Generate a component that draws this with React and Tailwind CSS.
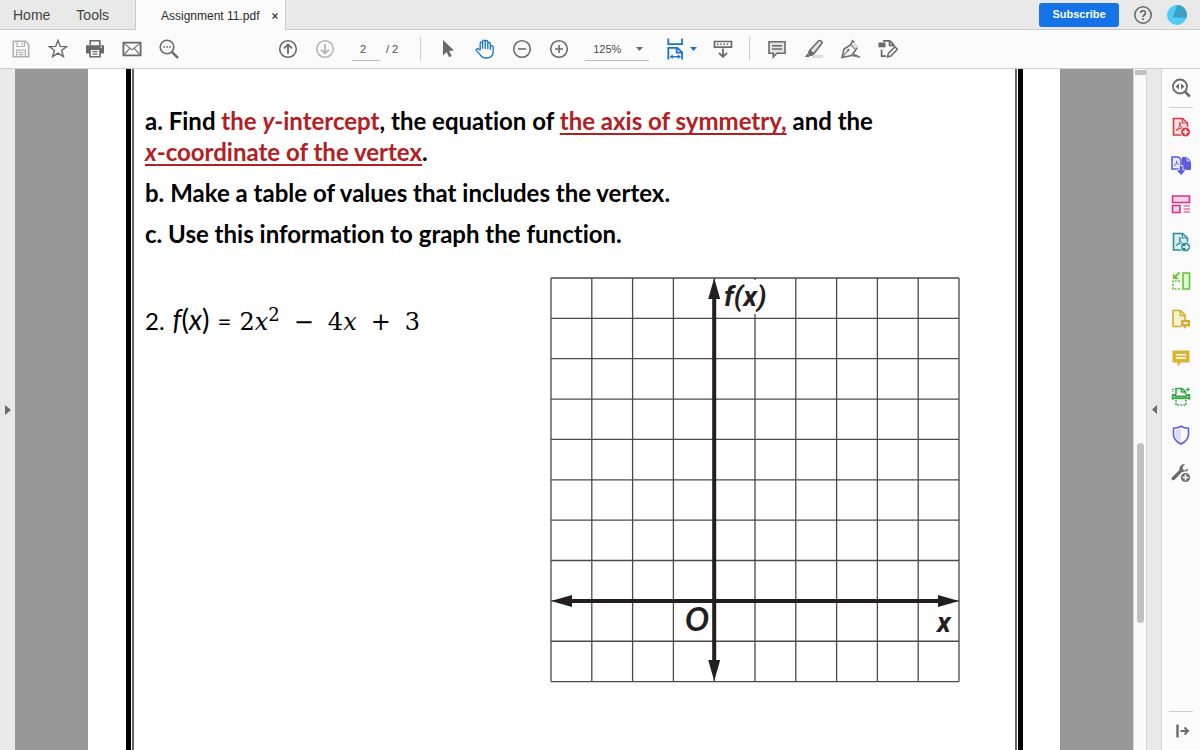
import { useState } from 'react'

const GREY = '#6a6a6a'

// 20x20 line drawing used by every toolbar button
function Icon({ size = 20, color = GREY, children }) {
    return (
        <svg
            width={size}
            height={size}
            viewBox="0 0 20 20"
            fill="none"
            stroke={color}
            strokeWidth="1.6"
            aria-hidden="true"
        >
            {children}
        </svg>
    )
}

function IconButton({ label, size, color, children }) {
    return (
        <button aria-label={label} className="flex h-5 w-5 shrink-0 items-center justify-center">
            <Icon size={size} color={color}>{children}</Icon>
        </button>
    )
}

function TabBar() {
    return (
        <header className="flex h-[30px] shrink-0 bg-[#e9e9e9] text-sm text-[#444]">
            <nav className="flex w-[136px] shrink-0 items-center gap-[26px] border-r border-b border-[#cbcbcb] pl-[13px]">
                <a href="#home">Home</a>
                <a href="#tools">Tools</a>
            </nav>
            <div className="flex w-[149px] shrink-0 items-center bg-[#fbfbfb] pt-px pl-[25px] text-xs text-[#2c2c2c]">
                <span className="whitespace-nowrap">Assignment 11.pdf</span>
                <button aria-label="Close tab" className="ml-3">
                    <svg width="6" height="6" viewBox="0 0 7 7" stroke="#444" strokeWidth="1.6">
                        <path d="M.7.7l5.6 5.6M6.3.7L.7 6.3" />
                    </svg>
                </button>
            </div>
            <div className="flex flex-1 items-center justify-end border-b border-l border-[#cbcbcb] pr-[13px]">
                <button className="mr-[14px] h-6 w-20 rounded-[3px] bg-[#1473e6] text-[11px] font-bold text-white">
                    Subscribe
                </button>
                <IconButton label="Help">
                    <circle cx="10" cy="10" r="8.2" />
                    <path d="M7.6 8.1a2.4 2.3 0 1 1 3.7 1.9c-.9.6-1.3.9-1.3 2" strokeWidth="1.7" />
                    <path d="M9.1 13.2h1.8v1.8H9.1z" fill={GREY} stroke="none" />
                </IconButton>
                <button aria-label="Account" className="ml-[14px]">
                    <svg width="20" height="20" viewBox="0 0 20 20">
                        <circle cx="10" cy="10" r="10" fill="#4fcdf8" />
                        <path d="M10.2 0A10 10 0 0 1 19.6 12.8L5.8 12.2z" fill="#3e9fc4" />
                    </svg>
                </button>
            </div>
        </header>
    )
}

function Toolbar() {
    const [page, setPage] = useState('2')
    const [zoom, setZoom] = useState('125%')

    return (
        <div className="flex h-[39px] shrink-0 items-center border-b border-[#cfcfcf] bg-[#fbfbfb] pl-[11px] text-[11px] text-[#4b4b4b]">
            <div className="flex gap-[17px]">
                <IconButton label="Save" color="#b0b0b0">
                    <path d="M2.3 2.3h12.2l3.2 3.2v12.2H2.3z" />
                    <path d="M6 2.5v5h7.5v-5M5.7 17.5v-6.3h8.6v6.3M7.5 13.5h5M7.5 15.6h5M11.2 3.5v2.5" strokeWidth="1.2" />
                </IconButton>
                <IconButton label="Star">
                    <path d="M10 1.4l2.3 6 6.3.2-5 3.9 1.8 6.2-5.4-3.6-5.4 3.6 1.8-6.2-5-3.9 6.3-.2z" strokeWidth="1.4" />
                </IconButton>
                <IconButton label="Print">
                    <path d="M5.2 6V1.8h9.6V6" />
                    <path d="M1 6.2h18v8.3H1z" fill={GREY} stroke="none" />
                    <path d="M5 10.2h10v7.6H5z" fill="#fbfbfb" />
                    <path d="M7.5 12.7h5M7.5 15.2h5" strokeWidth="1.2" />
                    <path d="M15.5 8.2h1.4" stroke="#fff" strokeWidth="1.2" />
                </IconButton>
                <IconButton label="Email">
                    <path d="M1.4 3.7h17.2v12.6H1.4z" strokeWidth="1.8" />
                    <path d="M2 4.3l8 6.6 8-6.6M2 15.8l5.8-6.4M18 15.8l-5.8-6.4" strokeWidth="1.1" />
                </IconButton>
                <IconButton label="Find">
                    <circle cx="8" cy="8" r="6.8" />
                    <path d="M12.8 12.8l6.2 6.2" strokeWidth="2.4" />
                    <path d="M4.3 8h1.7M7.2 8h1.7M10.1 8h1.7" />
                </IconButton>
            </div>

            <div className="ml-[99px] flex gap-[17px]">
                <IconButton label="Previous page">
                    <circle cx="10" cy="10" r="8.3" />
                    <path d="M10 15V5.5M6 9.4l4-4 4 4" strokeWidth="1.8" />
                </IconButton>
                <IconButton label="Next page" color="#b5b5b5">
                    <circle cx="10" cy="10" r="8.3" />
                    <path d="M10 5v9.5M6 10.6l4 4 4-4" strokeWidth="1.8" />
                </IconButton>
            </div>
            <input
                aria-label="Page number"
                value={page}
                onChange={(e) => setPage(e.target.value)}
                className="ml-[17px] h-6 w-7 border-b border-[#bdbdbd] bg-transparent pr-[6px] text-center outline-none"
            />
            <span className="ml-[6px] pt-px whitespace-nowrap">/ 2</span>

            <div className="ml-[22px] h-6 w-px bg-[#d0d0d0]" />

            <div className="ml-[17px] flex gap-[17px]">
                <IconButton label="Select">
                    <path d="M5 1v15.4l3.6-3.3 2.5 5.2 2.6-1.2-2.5-5.1 4.8-.4z" fill={GREY} stroke="none" />
                </IconButton>
                <IconButton label="Hand" color="#1473d0">
                    <path
                        d="M5.2 11V4.2c0-1.6 2.4-1.6 2.4 0V9.300V2.500c0-1.700 2.600-1.700 2.600 0V9.300V2.700c0-1.600 2.600-1.600 2.600 0v6.800V4.600c0-1.500 2.500-1.500 2.500 0v5.800V7.800c0-1.500 2.900-1.500 2.900.2v4.500c0 4.200-2.700 6.500-7 6.500-3.200 0-4.800-1.100-6.200-3.400L1.300 11.400c-.7-1.500 1.100-2.500 2.200-1.200z"
                        strokeWidth="1.3"
                        strokeLinejoin="round"
                    />
                </IconButton>
                <IconButton label="Zoom out">
                    <circle cx="10" cy="10" r="8.3" />
                    <path d="M6 10h8" />
                </IconButton>
                <IconButton label="Zoom in">
                    <circle cx="10" cy="10" r="8.3" />
                    <path d="M6 10h8M10 6v8" />
                </IconButton>
            </div>

            <div className="ml-4 flex h-6 w-16 items-center border-b border-[#bdbdbd]">
                <select
                    aria-label="Zoom level"
                    value={zoom}
                    onChange={(e) => setZoom(e.target.value)}
                    className="w-[51px] appearance-none bg-transparent pt-px pl-2 outline-none"
                >
                    <option>100%</option>
                    <option>125%</option>
                    <option>150%</option>
                </select>
                <svg width="7" height="4" viewBox="0 0 7 4">
                    <path d="M0 0h7L3.500 4z" fill={GREY} />
                </svg>
            </div>

            <button aria-label="Fit width" className="ml-4 flex items-center gap-[3px]">
                <Icon size={22} color="#1473d0">
                    <path d="M3 .5v5h12.500V.5" />
                    <path d="M3 19.500V9h8.300l4.200 4v6.500M10.600 9v4.400h4.600" />
                    <path d="M5 17h9" strokeWidth="1.300" />
                    <path d="M7 14.800L4.500 17 7 19.200zM11.600 14.800l2.500 2.200-2.500 2.200z" fill="#1473d0" stroke="none" />
                </Icon>
                <svg width="7" height="4" viewBox="0 0 7 4">
                    <path d="M0 0h7L3.500 4z" fill="#1473d0" />
                </svg>
            </button>
            <div className="ml-4 flex">
                <IconButton label="Read mode">
                    <path d="M1.500 2.500h17v5.700h-17z" strokeWidth="1.700" />
                    <path d="M4 5.300h12" strokeDasharray="1.600 1.600" />
                    <path d="M10 9.500v8M6 14l4 3.800 4-3.800" strokeWidth="1.800" />
                </IconButton>
            </div>

            <div className="ml-4 h-6 w-px bg-[#d0d0d0]" />

            <div className="ml-[17px] flex gap-[17px]">
                <IconButton label="Comment">
                    <path d="M2 2.700h16v11.600H9.800L6.300 18v-3.700H2z" fill="#e3e3e3" />
                    <path d="M5 6.700h10M5 10h10" strokeWidth="1.400" />
                </IconButton>
                <IconButton label="Highlight">
                    <path d="M8 16h11v3H8z" fill="#dcdcdc" stroke="none" />
                    <path d="M5.700 11.500L14.500 2c1.500-1.300 4.300.8 3.200 2.600L9.500 15z" fill="#e3e3e3" />
                    <path d="M5.700 11.200L4 14.300l3 2.500 3-2z" fill={GREY} strokeWidth="1" />
                    <path d="M3.300 14.800L.8 18h4l1.500-1.200z" fill={GREY} stroke="none" />
                </IconButton>
                <IconButton label="Sign">
                    <path d="M1 18.500l2-8.500 7-4.500 4.800 5.300-4.200 5.700z" strokeWidth="1.500" />
                    <path d="M10 5.300l2-3.500 5.400 5.600-2.500 3.300" fill="#dedede" stroke="none" />
                    <path d="M9.600 5.600l1.900-4 2 1.800M14.500 10.800l2-2" strokeWidth="1.300" />
                    <path d="M1.500 18l5.300-6.400" strokeWidth="1.100" />
                    <circle cx="7.400" cy="11" r="1.200" fill={GREY} stroke="none" />
                    <path d="M12 17.500c2-3.500 2.600-2.200 1.600.3 1.300-1.800 2.300-2 2 0 .8-1.500 1.500-1 1.300 0h2.500" strokeWidth="1.200" />
                </IconButton>
                <IconButton label="Edit PDF">
                    <path d="M.5 3.500h7v4.800h-7z" fill={GREY} stroke="none" />
                    <path d="M5 1.800h6.800l4 4v2M11.500 2v4.300h4.300M3.600 10.500v6.700h4.500" strokeWidth="1.700" />
                    <path d="M9.500 18l.8-3.500 6.700-6.700 2.400 2.400-6.600 6.800z" fill="#fbfbfb" strokeWidth="1.500" />
                </IconButton>
            </div>
        </div>
    )
}

// Coordinate grid: 10 columns by 10 rows, origin four columns in and eight rows down
function Graph() {
    const lines = Array.from({ length: 11 }, (_, i) => i)
    return (
        <svg
            width="410"
            height="406"
            viewBox="0 0 410 406"
            className="shrink-0 overflow-visible"
            role="img"
            aria-label="Blank coordinate grid"
        >
            {lines.map((i) => (
                <path
                    key={i}
                    d={`M${1 + i * 40.8} 1v403.600M1 ${1 + i * 40.36}h408`}
                    stroke="#4c4a4b"
                    strokeWidth="1.300"
                    fill="none"
                />
            ))}
            <path d="M176 3h42v34h-42z" fill="#fff" />
            <g stroke="#231f20" strokeWidth="4" fill="#231f20">
                <path d="M164.200 22v362M20 323.900h372" />
                <path d="M164.200 1l6 21h-12zM164.200 404l-6-21h12zM1 323.900l21-6v12zM409 323.900l-21-6v12z" stroke="none" />
            </g>
            <g fill="#231f20" className="font-['Roboto',sans-serif] text-[28px] font-bold italic">
                <text x="174" y="29">f(x)</text>
                <text x="135" y="354" className="font-['Lato',sans-serif] text-[32px]">O</text>
                <text x="387" y="355">x</text>
            </g>
        </svg>
    )
}

function Page() {
    return (
        <main className="flex min-w-0 flex-1 bg-[#999] px-[73px]">
            <div className="flex flex-1 bg-white pr-[37px] pl-[38px]">
                <div className="flex flex-1 border-x-[5px] border-black px-px">
                    <article className="flex-1 overflow-hidden border-x-2 border-[#666] pt-9 pl-[11px] font-['Lato',sans-serif] text-black [font-variant-ligatures:none]">
                        <div className="space-y-[10px] text-[24px] leading-[31px] font-bold whitespace-nowrap">
                            <p>
                                a. Find <span className="text-[#b32022]">the <i>y</i>-intercept</span>, the equation of{' '}
                                <span className="text-[#b32022] underline decoration-2 underline-offset-[3px] [text-decoration-skip-ink:none]">
                                    the axis of symmetry,
                                </span>{' '}
                                and the
                                <br />
                                <span className="text-[#b32022] underline decoration-2 underline-offset-[3px] [text-decoration-skip-ink:none]">
                                    <i>x</i>-coordinate of the vertex
                                </span>.
                            </p>
                            <p>b. Make a table of values that includes the vertex.</p>
                            <p>c. Use this information to graph the function.</p>
                        </div>
                        <div className="mt-7 flex">
                            <div className="mt-6 flex h-9 w-[405px] shrink-0 items-baseline text-[24px] leading-9 whitespace-nowrap">
                                <span>2.</span>
                                <span className="ml-2 text-[28px]"><i>f</i>(<i>x</i>)</span>
                                <span className="ml-2">=</span>
                                <span className="ml-2 flex items-baseline gap-[14px] font-['DejaVu_Serif',serif]">
                                    <span>2<i>x</i><sup className="text-[18px]">2</sup></span>
                                    <span>−</span>
                                    <span>4<i>x</i></span>
                                    <span>+</span>
                                    <span>3</span>
                                </span>
                            </div>
                            <Graph />
                        </div>
                    </article>
                </div>
            </div>
        </main>
    )
}

function Sheet({ color, fill }) {
    return (
        <>
            <path d="M2.500 1.500h9l5 4.500v12h-14z" fill={fill} stroke={color} />
            <path d="M11.300 1.500V6h5" stroke={color} strokeWidth="1.200" />
            <path d="M5 13.500c3-2 4.500-5 4.300-7.500-.2-1.500-1.500-.5-.8 1.300.8 2.300 2.300 4 5 4.200-3-.8-6 .3-8.500 2z" stroke={color} strokeWidth="1" />
        </>
    )
}

const tools = [
    {
        label: 'Create PDF',
        color: '#d83b46',
        art: (
            <>
                <Sheet color="#d83b46" fill="#f9dfe1" />
                <circle cx="14.500" cy="15" r="5" fill="#d83b46" stroke="#fbfbfb" strokeWidth="1" />
                <path d="M11.800 15h5.400M14.500 12.300v5.400" stroke="#fff" />
            </>
        ),
    },
    {
        label: 'Combine files',
        color: '#5c5ce0',
        art: (
            <>
                <path d="M1 2h6.500L10 4.500V14H1z" fill="#e7e7fb" />
                <path d="M3 11c2-1.500 3-3.500 2.700-5.300M5.500 7c.5 1.600 1.300 2.400 2.600 2.600" strokeWidth="1" />
                <path d="M11 2h5l4 4v9h-9z" fill="#5c5ce0" stroke="none" />
                <path d="M16 2v4h4" stroke="#fbfbfb" strokeWidth=".8" />
                <path d="M8.300 10.500h3.600v4.500h3.300L10.100 20.500 5 15h3.300z" fill="#5c5ce0" stroke="#fbfbfb" strokeWidth=".8" />
            </>
        ),
    },
    {
        label: 'Organize pages',
        color: '#d8318d',
        art: (
            <>
                <path d="M1.500 2h17v6.500h-17zM1.500 11.500H9V18.500H1.500z" fill="#f7d3e6" />
                <path d="M12.500 12h6.500M12.500 15h6.500M12.500 18h6.500" strokeWidth="1.200" />
            </>
        ),
    },
    {
        label: 'Export PDF',
        color: '#2d8f94',
        art: (
            <>
                <Sheet color="#2d8f94" fill="#d9edee" />
                <circle cx="14.500" cy="15" r="5" fill="#2d8f94" stroke="#fbfbfb" strokeWidth="1" />
                <path d="M11.500 15h5.500M14.700 12.500l2.500 2.500-2.500 2.500" stroke="#fff" strokeWidth="1.400" />
            </>
        ),
    },
    {
        label: 'Compress pages',
        color: '#62c92e',
        art: (
            <>
                <path d="M12 2h6.500v16H12z" fill="#e0f6d5" />
                <path d="M9 10H2v8h8" strokeDasharray="2 1.300" />
                <path d="M8.500 1.500L4 6" strokeWidth="2" />
                <path d="M2 2.500V8h6z" fill="#62c92e" stroke="none" />
            </>
        ),
    },
    {
        label: 'Send for comments',
        color: '#d3ac2c',
        art: (
            <>
                <path d="M10 17.500H2v-16h7.500l4.500 4.500v5M9.300 1.500v5H14" fill="#faf1d3" />
                <path d="M10 11h9v6.500h-3.500L13 20v-2.500h-3z" fill="#d3ac2c" stroke="none" />
                <path d="M12.500 13h4v2.200h-4z" fill="#faf1d3" stroke="none" />
            </>
        ),
    },
    {
        label: 'Comment',
        color: '#dcb52e',
        art: (
            <>
                <path d="M1.500 2.500h17v12H10l-3.500 4.200v-4.200h-5z" fill="#dcb52e" stroke="none" />
                <path d="M5 6.700h10M5 10h10" stroke="#fff" />
            </>
        ),
    },
    {
        label: 'Scan and OCR',
        color: '#37a847',
        art: (
            <>
                <path d="M5 8V2.500h6l3.500 3V8M10.500 3v3h3.500" strokeWidth="1.600" />
                <path d="M1.700 13.500V9h2.800v1.500h11V9h2.800v4.500" strokeWidth="1.800" />
                <path d="M.8 12.300h18.400" strokeWidth="1.800" />
                <path d="M5 14v5h10v-5" strokeDasharray="1.800 1.300" />
                <path d="M17 1.500v4M15 3.500h4M1 3.500h2M1 5.500h1" strokeWidth="1.200" />
            </>
        ),
    },
    {
        label: 'Protect',
        color: '#5c5ce0',
        art: (
            <>
                <path d="M10 1.200c2.500 1.500 4.700 2 7.500 2v6c0 4.500-2.700 7.500-7.500 9.800-4.800-2.300-7.500-5.300-7.500-9.800v-6c2.800 0 5-.5 7.500-2z" />
                <path d="M10 3.200c-1.700 1-3.500 1.500-5.600 1.600v4.400c0 3.500 1.800 5.800 5.600 7.700z" fill="#d9d9f8" stroke="none" />
            </>
        ),
    },
    {
        label: 'More tools',
        color: GREY,
        art: (
            <>
                <path d="M2.300 15.500l8-8" strokeWidth="3.400" strokeLinecap="round" />
                <path d="M14 1a5 5 0 0 0-5.500 6.200l2.800 2.600c2.500.8 5.600-.5 5.700-4.600l-2.700 2.200-2.300-.8-.4-2.500z" fill={GREY} stroke="none" />
                <circle cx="14.500" cy="14.500" r="5.400" fill={GREY} stroke="#fbfbfb" />
                <path d="M11.500 14.500h6M14.500 11.500v6" stroke="#fff" />
            </>
        ),
    },
]

function ToolsPanel() {
    return (
        <aside className="flex w-[38px] shrink-0 flex-col items-center bg-[#fbfbfb] pt-[9px]">
            <IconButton label="Search tools">
                <circle cx="9" cy="8.500" r="7" strokeWidth="1.800" />
                <path d="M13.800 13.500l5 5" strokeWidth="2.600" />
                <path d="M8 5.500v6L4.500 8.500zM10 5.500v6l3.500-3z" fill={GREY} stroke="none" />
            </IconButton>
            <div className="mt-[9px] h-px w-6 bg-[#cfcfcf]" />
            <div className="mt-[9px] flex h-[366px] flex-col justify-between">
                {tools.map((tool) => (
                    <IconButton key={tool.label} label={tool.label} color={tool.color}>
                        {tool.art}
                    </IconButton>
                ))}
            </div>
            <div className="mt-auto h-px w-6 bg-[#cfcfcf]" />
            <div className="flex h-[38px] items-center">
                <IconButton label="Expand panel">
                    <path d="M6.500 3.500v13" strokeWidth="2.400" />
                    <path d="M9.500 10h7.500M13.500 6.500l3.600 3.500-3.600 3.500" strokeWidth="1.800" />
                </IconButton>
            </div>
        </aside>
    )
}

export default function App() {
    return (
        <div className="flex h-screen flex-col overflow-hidden font-['Liberation_Sans',Arial,sans-serif]">
            <TabBar />
            <Toolbar />
            <div className="flex min-h-0 flex-1">
                <button aria-label="Open left panel" className="flex w-[15px] shrink-0 items-center justify-center bg-[#e9e9e9]">
                    <svg width="6" height="10" viewBox="0 0 6 10"><path d="M0 0v10l6-5z" fill={GREY} /></svg>
                </button>
                <Page />
                {/* Scrollbar */}
                <div className="flex w-[14px] shrink-0 flex-col items-center border-x border-[#d6d6d6] bg-[#fafafa] pt-px">
                    <div className="h-[5px] w-[11px] bg-[#c1c1c1]" />
                    <div className="flex-[368]" />
                    <div className="h-[180px] w-[7px] rounded-full bg-[#c1c1c1]" />
                    <div className="flex-[127]" />
                </div>
                <button aria-label="Close right panel" className="flex w-[15px] shrink-0 items-center justify-center border-r border-[#d6d6d6] bg-[#e9e9e9]">
                    <svg width="5" height="9" viewBox="0 0 5 9"><path d="M5 0v9L0 4.500z" fill={GREY} /></svg>
                </button>
                <ToolsPanel />
            </div>
        </div>
    )
}
